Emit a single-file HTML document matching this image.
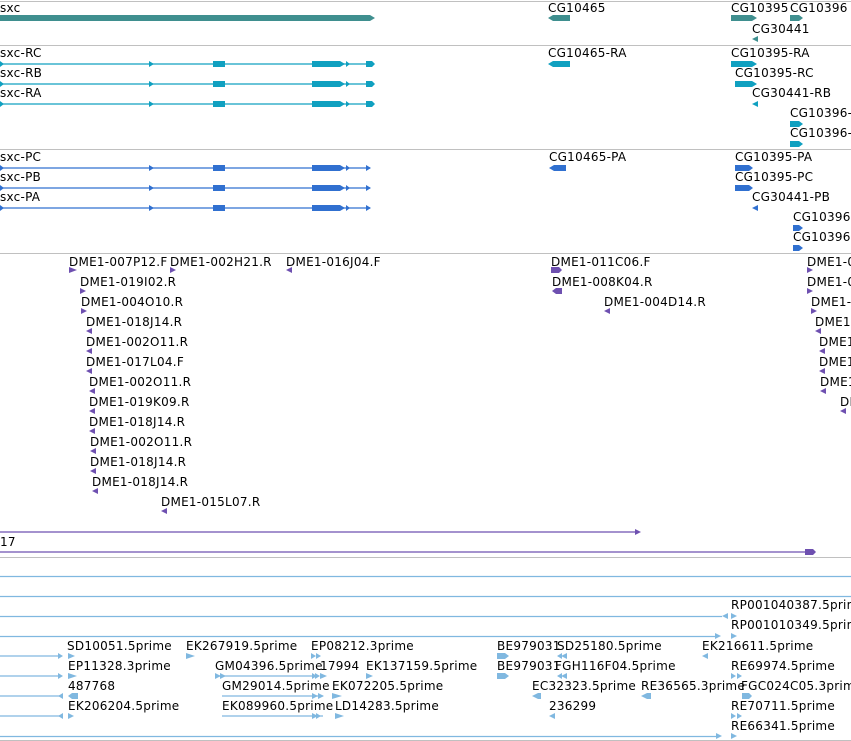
<!DOCTYPE html>
<html><head><meta charset="utf-8"><style>
html,body{margin:0;padding:0;background:#fff;overflow:hidden}
svg{display:block}
text{font-family:"DejaVu Sans","Liberation Sans",sans-serif;font-size:12px;letter-spacing:0.25px;fill:#000}
</style></head><body>
<svg width="851" height="741" viewBox="0 0 851 741" xmlns="http://www.w3.org/2000/svg">
<g stroke="#c0c0c0" stroke-width="1">
<line x1="0" y1="1.5" x2="851" y2="1.5"/><line x1="0" y1="45.5" x2="851" y2="45.5"/>
<line x1="0" y1="149.5" x2="851" y2="149.5"/><line x1="0" y1="253.5" x2="851" y2="253.5"/>
<line x1="0" y1="557.5" x2="851" y2="557.5"/><line x1="0" y1="740.5" x2="851" y2="740.5"/>
</g>
<!-- Track 1 -->
<g fill="#3f8f8f">
<polygon points="0,15 370,15 375,18 370,21 0,21"/>
<polygon points="548,18 553,15 570,15 570,21 553,21"/>
<polygon points="731,15 752,15 757,18 752,21 731,21"/>
<polygon points="790,15 799,15 803,18 799,21 790,21"/>
<polygon points="752,39 758,36 758,42"/>
</g>
<text x="0" y="12">sxc</text><text x="548" y="12">CG10465</text><text x="731" y="12">CG10395</text><text x="790" y="12">CG10396</text><text x="752" y="33">CG30441</text>
<!-- Track 2 -->
<g stroke="#10a0c0" stroke-width="1.3"><line x1="0" y1="64" x2="372" y2="64"/><line x1="0" y1="84" x2="372" y2="84"/><line x1="0" y1="104" x2="372" y2="104"/></g>
<g fill="#10a0c0">
<g id="t2"><polygon points="0,61 4,64 0,67"/><polygon points="149,61 154,64 149,67"/><polygon points="213,61 225,61 225,67 213,67"/><polygon points="312,61 340,61 345,64 340,67 312,67"/><polygon points="346,61 350,64 346,67"/><polygon points="366,61 372,61 375,64 372,67 366,67"/></g>
<use href="#t2" y="20"/><use href="#t2" y="40"/>
<polygon points="548,64 553,61 570,61 570,67 553,67"/>
<polygon points="731,61 752,61 757,64 752,67 731,67"/>
<polygon points="735,81 752,81 757,84 752,87 735,87"/>
<polygon points="752,104 758,101 758,107"/>
<polygon points="790,121 799,121 803,124 799,127 790,127"/>
<polygon points="790,141 799,141 803,144 799,147 790,147"/>
</g>
<text x="0" y="57">sxc-RC</text><text x="0" y="77">sxc-RB</text><text x="0" y="97">sxc-RA</text>
<text x="548" y="57">CG10465-RA</text><text x="731" y="57">CG10395-RA</text><text x="735" y="77">CG10395-RC</text><text x="752" y="97">CG30441-RB</text><text x="790" y="117">CG10396-RA</text><text x="790" y="137">CG10396-RB</text>
<!-- Track 3 -->
<g stroke="#3070d0" stroke-width="1.3"><line x1="0" y1="168" x2="370" y2="168"/><line x1="0" y1="188" x2="370" y2="188"/><line x1="0" y1="208" x2="370" y2="208"/></g>
<g fill="#3070d0">
<g id="t3"><polygon points="0,165 4,168 0,171"/><polygon points="149,165 154,168 149,171"/><polygon points="213,165 225,165 225,171 213,171"/><polygon points="312,165 340,165 345,168 340,171 312,171"/><polygon points="346,165 350,168 346,171"/><polygon points="366,165 371,168 366,171"/></g>
<use href="#t3" y="20"/><use href="#t3" y="40"/>
<polygon points="549,168 554,165 566,165 566,171 554,171"/>
<polygon points="735,165 749,165 753,168 749,171 735,171"/>
<polygon points="735,185 749,185 753,188 749,191 735,191"/>
<polygon points="752,208 758,205 758,211"/>
<polygon points="793,225 799,225 803,228 799,231 793,231"/>
<polygon points="793,245 799,245 803,248 799,251 793,251"/>
</g>
<text x="0" y="161">sxc-PC</text><text x="0" y="181">sxc-PB</text><text x="0" y="201">sxc-PA</text>
<text x="549" y="161">CG10465-PA</text><text x="735" y="161">CG10395-PA</text><text x="735" y="181">CG10395-PC</text><text x="752" y="201">CG30441-PB</text><text x="793" y="221">CG10396-PA</text><text x="793" y="241">CG10396-PB</text>
<!-- Track 4 -->
<g fill="#6e50b0">
<polygon points="69,267 77,270 69,273"/><polygon points="170,267 176,270 170,273"/><polygon points="286,270 292,267 292,273"/>
<polygon points="80,288 86,291 80,294"/><polygon points="81,308 87,311 81,314"/><polygon points="86,331 92,328 92,334"/><polygon points="86,351 92,348 92,354"/><polygon points="86,371 92,368 92,374"/>
<polygon points="89,391 95,388 95,394"/><polygon points="89,411 95,408 95,414"/><polygon points="89,431 95,428 95,434"/><polygon points="90,451 96,448 96,454"/><polygon points="90,471 96,468 96,474"/><polygon points="92,491 98,488 98,494"/><polygon points="161,511 167,508 167,514"/>
<polygon points="551,267 559,267 562,270 559,273 551,273"/><polygon points="552,291 556,288 562,288 562,294 556,294"/><polygon points="604,311 610,308 610,314"/>
<polygon points="807,267 813,270 807,273"/><polygon points="807,288 813,291 807,294"/><polygon points="811,308 817,311 811,314"/><polygon points="815,331 821,328 821,334"/><polygon points="819,351 825,348 825,354"/><polygon points="819,371 825,368 825,374"/><polygon points="820,391 826,388 826,394"/><polygon points="840,411 846,408 846,414"/>
<polygon points="635,529 641,532 635,535"/><polygon points="805,549 813,549 816,552 813,555 805,555"/>
</g>
<g stroke="#6e50b0" stroke-width="1.3"><line x1="0" y1="532" x2="636" y2="532"/><line x1="0" y1="552" x2="806" y2="552"/></g>
<text x="69" y="266">DME1-007P12.F</text><text x="170" y="266">DME1-002H21.R</text><text x="286" y="266">DME1-016J04.F</text>
<text x="80" y="286">DME1-019I02.R</text><text x="81" y="306">DME1-004O10.R</text><text x="86" y="326">DME1-018J14.R</text><text x="86" y="346">DME1-002O11.R</text><text x="86" y="366">DME1-017L04.F</text>
<text x="89" y="386">DME1-002O11.R</text><text x="89" y="406">DME1-019K09.R</text><text x="89" y="426">DME1-018J14.R</text><text x="90" y="446">DME1-002O11.R</text><text x="90" y="466">DME1-018J14.R</text><text x="92" y="486">DME1-018J14.R</text><text x="161" y="506">DME1-015L07.R</text>
<text x="551" y="266">DME1-011C06.F</text><text x="552" y="286">DME1-008K04.R</text><text x="604" y="306">DME1-004D14.R</text>
<text x="807" y="266">DME1-0</text><text x="807" y="286">DME1-0</text><text x="811" y="306">DME1-0</text><text x="815" y="326">DME1-0</text><text x="819" y="346">DME1-0</text><text x="819" y="366">DME1-0</text><text x="820" y="386">DME1-0</text><text x="840" y="406">DI</text>
<text x="0" y="546">17</text>
<!-- Track 5 -->
<g stroke="#80b8e0" stroke-width="1.3">
<line x1="0" y1="576.5" x2="851" y2="576.5"/><line x1="0" y1="596.5" x2="851" y2="596.5"/>
<line x1="0" y1="616.5" x2="722" y2="616.5"/><line x1="0" y1="636.5" x2="718" y2="636.5"/>
<line x1="0" y1="656" x2="60" y2="656"/><line x1="0" y1="676" x2="60" y2="676"/><line x1="0" y1="696" x2="60" y2="696"/><line x1="0" y1="716" x2="60" y2="716"/>
<line x1="215" y1="676" x2="315" y2="676"/><line x1="222" y1="696" x2="323" y2="696"/><line x1="222" y1="716" x2="323" y2="716"/>
<line x1="0" y1="736.5" x2="716" y2="736.5"/>
</g>
<g fill="#80b8e0">
<polygon points="722,616 728,613 728,619"/><polygon points="731,613 737,616 731,619"/>
<polygon points="715,633 721,636 715,639"/><polygon points="731,633 737,636 731,639"/>
<polygon points="58,653 63,656 58,659"/><polygon points="58,673 63,676 58,679"/><polygon points="58,696 63,693 63,699"/><polygon points="58,716 63,713 63,719"/>
<polygon points="68,653 75,656 68,659"/><polygon points="68,673 77,676 68,679"/><polygon points="68,696 72,693 78,693 78,699 72,699"/><polygon points="68,713 74,716 68,719"/>
<polygon points="186,653 195,656 186,659"/><polygon points="311,653 316,656 311,659"/><polygon points="316,653 321,656 316,659"/>
<polygon points="215,673 221,676 215,679"/><polygon points="220,673 226,676 220,679"/><polygon points="315,673 320,676 315,679"/><polygon points="320,673 327,676 320,679"/>
<polygon points="312,673 317,676 312,679"/><polygon points="366,673 373,676 366,679"/>
<polygon points="312,693 318,696 312,699"/><polygon points="318,693 324,696 318,699"/><polygon points="332,693 342,696 332,699"/>
<polygon points="312,713 318,716 312,719"/><polygon points="316,713 321,716 316,719"/><polygon points="335,713 344,716 335,719"/>
<polygon points="497,653 505,653 509,656 505,659 497,659"/><polygon points="497,673 505,673 509,676 505,679 497,679"/>
<polygon points="557,656 562,653 562,659"/><polygon points="561,656 567,653 567,659"/><polygon points="557,676 562,673 562,679"/><polygon points="561,676 567,673 567,679"/>
<polygon points="532,696 538,693 541,693 541,699 538,699"/><polygon points="641,696 647,693 651,693 651,699 647,699"/><polygon points="742,693 749,693 752,696 749,699 742,699"/>
<polygon points="549,716 555,713 555,719"/><polygon points="702,656 708,653 708,659"/>
<polygon points="731,673 736,676 731,679"/><polygon points="737,673 742,676 737,679"/><polygon points="731,713 736,716 731,719"/><polygon points="737,713 742,716 737,719"/>
<polygon points="716,733 722,736 716,739"/><polygon points="731,733 737,736 731,739"/>
</g>
<text x="731" y="609">RP001040387.5prime</text><text x="731" y="629">RP001010349.5prime</text>
<text x="67" y="650">SD10051.5prime</text><text x="186" y="650">EK267919.5prime</text><text x="311" y="650">EP08212.3prime</text><text x="497" y="650">BE979031</text><text x="557" y="650">SD25180.5prime</text><text x="702" y="650">EK216611.5prime</text>
<text x="68" y="670">EP11328.3prime</text><text x="215" y="670">GM04396.5prime</text><text x="320" y="670">17994</text><text x="366" y="670">EK137159.5prime</text><text x="497" y="670">BE979031</text><text x="555" y="670">FGH116F04.5prime</text><text x="731" y="670">RE69974.5prime</text>
<text x="68" y="690">487768</text><text x="222" y="690">GM29014.5prime</text><text x="332" y="690">EK072205.5prime</text><text x="532" y="690">EC32323.5prime</text><text x="641" y="690">RE36565.3prime</text><text x="741" y="690">FGC024C05.3prime</text>
<text x="68" y="710">EK206204.5prime</text><text x="222" y="710">EK089960.5prime</text><text x="335" y="710">LD14283.5prime</text><text x="549" y="710">236299</text><text x="731" y="710">RE70711.5prime</text>
<text x="731" y="730">RE66341.5prime</text>
</svg>
</body></html>
